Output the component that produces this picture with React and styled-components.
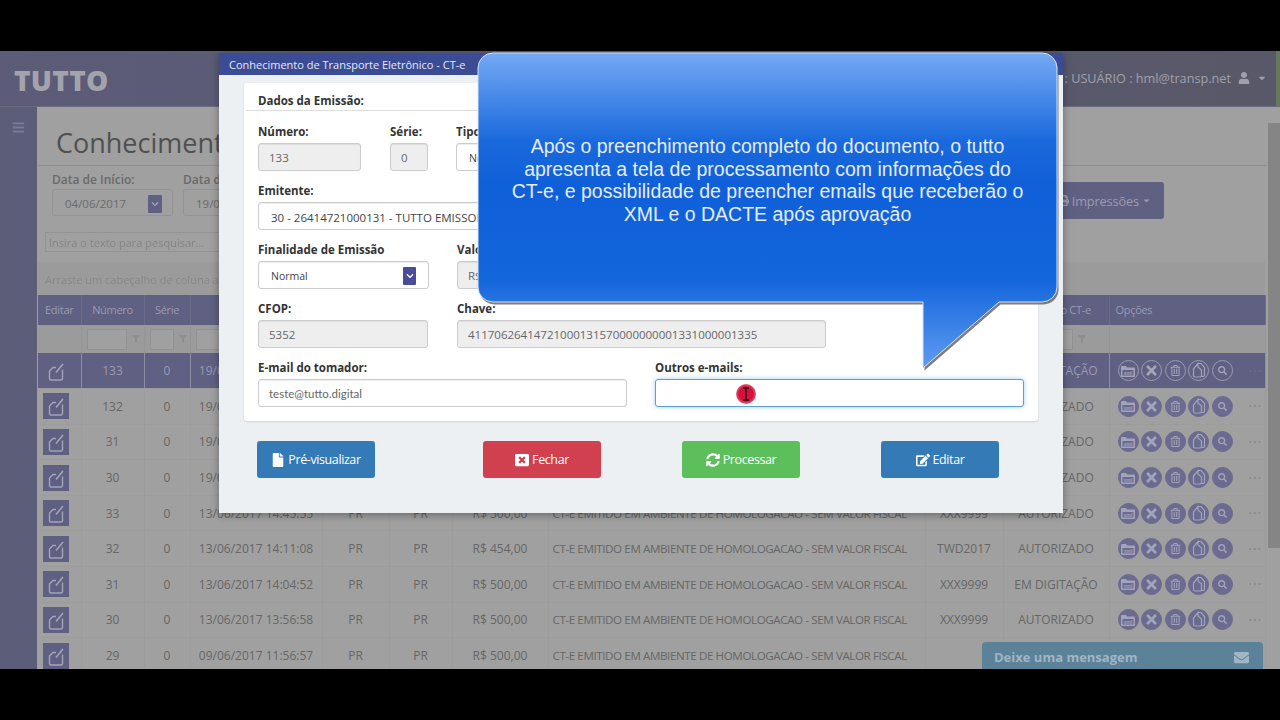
import React from "react";
import styled, { createGlobalStyle } from "styled-components";
import {
  FaBars,
  FaCaretDown,
  FaChevronDown,
  FaEdit,
  FaEnvelope,
  FaFile,
  FaFilter,
  FaPrint,
  FaRegTrashAlt,
  FaSearch,
  FaSyncAlt,
  FaTimes,
  FaUser,
  FaWindowClose,
} from "react-icons/fa";

const GlobalStyle = createGlobalStyle`
  html, body {
    margin: 0;
    height: 100%;
    background: #000;
    overflow: hidden;
  }
  * { box-sizing: border-box; }
  body { font-family: "Open Sans", "Liberation Sans", sans-serif; }
`;

const Stage = styled.div`
  width: 1280px;
  height: 720px;
  background: #000;
  padding: 51px 0;
`;

const Screen = styled.div`
  position: relative;
  width: 1280px;
  height: 618px;
  overflow: hidden;
  background: #a0a0a0;
`;

const Header = styled.header`
  height: 56px;
  background: linear-gradient(90deg, #5c5c78 0%, #5a5a74 50%, #585868 100%);
  border-right: 4px solid #66785f;
  border-bottom: 1px solid #6a6a7e;
  display: flex;
  align-items: center;
  padding: 0 9px 0 14px;
`;

const Logo = styled.div`
  font-size: 28px;
  font-weight: 800;
  color: #a3a3ac;
  letter-spacing: 0.3px;
  margin-top: 2px;
`;

const UserBox = styled.div`
  margin-left: auto;
  display: flex;
  align-items: center;
  gap: 7px;
  font-size: 12.7px;
  color: #a0a0ac;
  margin-top: -1px;
`;

const Body = styled.div`
  display: flex;
  height: 562px;
`;

const Sidebar = styled.aside`
  width: 37px;
  background: #5c5d79;
  color: #7a7b94;
  font-size: 13px;
  padding: 13px 0 0 12px;
  flex: none;
`;

const Main = styled.main`
  width: 1231px;
  flex: none;
  overflow: hidden;
`;

const Title = styled.h1`
  margin: 0 1px 0 1px;
  height: 59px;
  border-bottom: 1px solid #8f8f8f;
  font-size: 27px;
  font-weight: 400;
  color: #505050;
  padding: 17px 0 0 18px;
  line-height: 38px;
`;

const FilterRow = styled.div`
  display: flex;
  height: 66px;
  padding: 5px 104px 0 15px;
`;

const FilterField = styled.div`
  width: ${(p) => p.$w}px;
  margin-right: 10px;
`;

const FilterLabel = styled.div`
  font-size: 12px;
  font-weight: 600;
  color: #6a6a6a;
  height: 18px;
  line-height: 17px;
`;

const DateBox = styled.div`
  height: 27px;
  border: 1px solid #939393;
  border-radius: 3px;
  display: flex;
  align-items: center;
  padding: 2px 10px 0 12px;
  font-size: 11.5px;
  color: #6a6a6a;
  justify-content: space-between;
`;

const Arrow = styled.span`
  width: ${(p) => (p.$dim ? 14 : 13)}px;
  height: 18px;
  background: ${(p) => (p.$dim ? "#606082" : "#4a4c98")};
  color: ${(p) => (p.$dim ? "#a0a0b6" : "#fff")};
  border-radius: 1px;
  display: flex;
  align-items: center;
  justify-content: center;
  font-size: 8px;
  flex: none;
`;

const PrintButton = styled.div`
  margin-left: auto;
  width: 204px;
  height: 37px;
  background: #606082;
  border-radius: 3px;
  color: #9c9cb0;
  font-size: 12.7px;
  letter-spacing: -0.1px;
  display: flex;
  align-items: center;
  justify-content: flex-end;
  gap: 3px;
  padding-right: 13px;
  margin-top: 11px;
`;

const SearchRow = styled.div`
  height: 30px;
  padding-left: 8px;
`;

const SearchBox = styled.div`
  width: 300px;
  height: 20px;
  border: 1px solid #939393;
  font-size: 11px;
  color: #858585;
  padding-left: 3px;
  line-height: 19px;
  filter: blur(0.5px);
`;

const GroupPanel = styled.div`
  margin: 0 3px 0 1px;
  height: 33px;
  background: #9b9b9b;
  font-size: 11px;
  color: #888;
  padding: 10px 0 0 7px;
  filter: blur(0.4px);
`;

const Grid = styled.table`
  width: 1227px;
  margin-left: 1px;
  border-collapse: collapse;
  table-layout: fixed;
  font-size: 12px;
  color: #666;
`;

const HeadCell = styled.th`
  height: 30px;
  background: #606082;
  color: #9a9ab2;
  font-size: 11px;
  letter-spacing: -0.3px;
  font-weight: 400;
  text-align: ${(p) => (p.$left ? "left" : "center")};
  padding: 0 0 2px ${(p) => (p.$left ? 6 : 0)}px;
  border-right: 1px solid #6b6b8a;
  overflow: hidden;
  white-space: nowrap;
`;

const FilterCell = styled.td`
  height: 28px;
  background: #9b9b9b;
  border-right: 1px solid #959595;
  padding: 0 0 0 5px;
  white-space: nowrap;
`;

const FilterInput = styled.span`
  display: inline-block;
  vertical-align: middle;
  width: ${(p) => p.$w}px;
  height: 21px;
  border: 1px solid #929292;
  background: #a0a0a0;
`;

const FilterIcon = styled.span`
  display: inline-block;
  vertical-align: middle;
  margin-left: 5px;
  font-size: 8px;
  color: #8e8e8e;
`;

const Cell = styled.td`
  height: 35.6px;
  text-align: ${(p) => (p.$left ? "left" : "center")};
  padding: 0 0 0 ${(p) => (p.$left ? 4 : 0)}px;
  background: ${(p) => (p.$selected ? "#606083" : "#a0a0a0")};
  color: ${(p) => (p.$selected ? "#9a9ab2" : "#666")};
  font-size: ${(p) => (p.$left ? 11.6 : 12)}px;
  letter-spacing: ${(p) => (p.$left ? "-0.4px" : "0")};
  border-right: 1px solid ${(p) => (p.$selected ? "#8c8ca8" : "#9c9c9c")};
  border-bottom: 1px solid #9c9c9c;
  white-space: nowrap;
  overflow: hidden;
`;

const EditCell = styled(Cell)`
  text-align: left;
  padding-left: 5px;
`;

const EditBadge = styled.span`
  display: inline-flex;
  width: 26px;
  height: 26px;
  background: ${(p) => (p.$selected ? "transparent" : "#5f5f82")};
  color: #a3a3ba;
  vertical-align: middle;
`;

const OptionsWrap = styled.div`
  display: flex;
  align-items: center;
  padding-left: 8px;
  gap: 2.6px;
`;

const RoundIcon = styled.span`
  width: 21px;
  height: 21px;
  border-radius: 50%;
  flex: none;
  display: flex;
  align-items: center;
  justify-content: center;
  background: ${(p) => (p.$selected ? "transparent" : "#6a6b8e")};
  border: 1px solid ${(p) => (p.$selected ? "#9c9cb6" : "#6a6b8e")};
  color: #a3a3bc;
  --folder-fill: ${(p) => (p.$selected ? "#606083" : "#6a6b8e")};
`;

const More = styled.span`
  margin: 0 0 6px 13px;
  color: ${(p) => (p.$selected ? "#6c6c8c" : "#8b8b8b")};
  font-size: 12px;
  letter-spacing: 1.2px;
  line-height: 10px;
  font-weight: 700;
`;

const Scrollbar = styled.div`
  width: 12px;
  flex: none;
  padding-top: 16px;
`;

const ScrollThumb = styled.div`
  height: 425px;
  background: #858585;
`;

const Chat = styled.div`
  position: absolute;
  left: 982px;
  bottom: 0;
  width: 281px;
  height: 27px;
  background: #5b8299;
  border-radius: 4px 4px 0 0;
  display: flex;
  align-items: center;
  justify-content: space-between;
  padding: 3px 14px 0 12px;
  color: #a0b6c4;
  font-size: 13px;
  font-weight: 700;
`;

const Modal = styled.section`
  position: absolute;
  left: 219px;
  top: 2px;
  width: 844px;
  height: 460px;
  background: #ecf0f3;
  box-shadow: 0 2px 8px rgba(0, 0, 0, 0.35);
`;

const ModalTitle = styled.div`
  height: 22px;
  background: #3b4b96;
  color: #e6e9f5;
  font-size: 11px;
  font-weight: 400;
  line-height: 23px;
  padding-left: 10px;
`;

const ModalBody = styled.div`
  padding: 8px 25px 0;
`;

const Panel = styled.div`
  background: #fff;
  height: 338px;
  border-radius: 3px;
  box-shadow: 0 1px 2px rgba(0, 0, 0, 0.12);
  padding: 9px 14px 0;
`;

const PanelTitle = styled.div`
  font-size: 11.5px;
  font-weight: 700;
  color: #333;
  height: 19px;
  line-height: 18px;
  margin: 0 -12px 12px;
  padding-left: 12px;
  border-bottom: 1px solid #ddd;
`;

const FormRow = styled.div`
  display: flex;
  height: 48px;
  margin-bottom: 11px;
`;

const Field = styled.div`
  width: ${(p) => p.$w}px;
  margin-right: ${(p) => p.$gap || 0}px;
  flex: none;
`;

const Label = styled.label`
  display: block;
  font-size: 11.5px;
  font-weight: 700;
  color: #333;
  height: 20px;
  line-height: 17px;
  white-space: nowrap;
`;

const Input = styled.div`
  height: 28px;
  border: 1px solid ${(p) => (p.$focus ? "#5b9fd6" : "#ccc")};
  border-radius: 3px;
  background: ${(p) => (p.$readonly ? "#eee" : "#fff")};
  box-shadow: ${(p) =>
    p.$focus
      ? "0 0 5px rgba(102, 175, 233, 0.6)"
      : "inset 0 1px 1px rgba(0, 0, 0, 0.075)"};
  color: ${(p) => (p.$dark ? "#444" : "#666")};
  font-family: ${(p) => (p.$narrow ? "Lato, sans-serif" : "inherit")};
  font-size: ${(p) => p.$size || 11.5}px;
  padding: ${(p) => (p.$dark ? 2 : 0)}px ${(p) => (p.$pad ? 12 : 10)}px 0;
  display: flex;
  align-items: center;
  justify-content: space-between;
  white-space: nowrap;
  overflow: hidden;
`;

const ButtonRow = styled.div`
  display: grid;
  grid-template-columns: 226px 199px 199px 118px;
  padding: 20px 0 0 13px;
`;

const ActionButton = styled.button`
  height: 37px;
  width: 118px;
  border: none;
  border-radius: 3px;
  background: ${(p) => p.$bg};
  color: #fff;
  font-family: inherit;
  font-size: 12.5px;
  letter-spacing: -0.4px;
  display: flex;
  align-items: center;
  justify-content: center;
  gap: 3px;
  padding: 0;
  svg { font-size: 14px; }
`;

const Callout = styled.div`
  position: absolute;
  left: 472px;
  top: -3px;
  width: 592px;
  height: 328px;
`;

const CalloutShape = styled.svg`
  display: block;
  overflow: visible;
`;

const CalloutText = styled.p`
  position: absolute;
  left: 6px;
  top: 87px;
  width: 579px;
  margin: 0;
  text-align: center;
  font-family: "Liberation Sans", Arial, sans-serif;
  font-size: 19.5px;
  line-height: 22.6px;
  color: #e4ecf8;
`;

const Pointer = styled.div`
  position: absolute;
  left: 736px;
  top: 333px;
  width: 20px;
  height: 20px;
  border-radius: 50%;
  background: radial-gradient(circle, #d8103a 0%, #d8103a 50%, rgba(216, 16, 58, 0.2) 100%);
  display: flex;
  align-items: center;
  justify-content: center;
`;

const columns = [43, 63, 46, 132, 67, 63, 96, 377, 78, 106, 156];

const rows = [
  ["132", "19/06/2017 15:20:11", "PR", "PR", "R$ 500,00", "TWD2017", "AUTORIZADO"],
  ["31", "19/06/2017 15:02:40", "PR", "PR", "R$ 500,00", "XXX9999", "AUTORIZADO"],
  ["30", "19/06/2017 14:51:27", "PR", "PR", "R$ 500,00", "XXX9999", "AUTORIZADO"],
  ["33", "13/06/2017 14:45:55", "PR", "PR", "R$ 500,00", "XXX9999", "AUTORIZADO"],
  ["32", "13/06/2017 14:11:08", "PR", "PR", "R$ 454,00", "TWD2017", "AUTORIZADO"],
  ["31", "13/06/2017 14:04:52", "PR", "PR", "R$ 500,00", "XXX9999", "EM DIGITAÇÃO"],
  ["30", "13/06/2017 13:56:58", "PR", "PR", "R$ 500,00", "XXX9999", "AUTORIZADO"],
  ["29", "09/06/2017 11:56:57", "PR", "PR", "R$ 500,00", "", ""],
];

const NOTE = "CT-E EMITIDO EM AMBIENTE DE HOMOLOGACAO - SEM VALOR FISCAL";

function EditGlyph() {
  return (
    <svg width="26" height="26" viewBox="0 0 26 26" fill="none" stroke="currentColor" strokeWidth="1.4">
      <path d="M13 9.5H10L6.5 13v7.5A1.5 1.5 0 0 0 8 22h10a1.5 1.5 0 0 0 1.5-1.5V11.5" />
      <path d="M13 14.5 20 6" strokeWidth="1.6" />
    </svg>
  );
}

function XmlFolder() {
  return (
    <svg width="14" height="12" viewBox="0 0 14 12">
      <path d="M0 2a1 1 0 0 1 1-1h4l1 1.5h7a1 1 0 0 1 1 1V11a1 1 0 0 1-1 1H1a1 1 0 0 1-1-1z" fill="currentColor" />
      <rect x="1.5" y="5" width="11" height="5.5" fill="var(--folder-fill)" />
      <text x="7" y="9.6" textAnchor="middle" fontSize="5" fontWeight="700" fill="currentColor" fontFamily="Liberation Sans">
        xml
      </text>
    </svg>
  );
}

function CopyGlyph() {
  return (
    <svg width="14" height="17" viewBox="0 0 14 17" fill="none" stroke="currentColor" strokeWidth="1.2">
      <path d="M6 1.5h3l3.5 4V13a1.5 1.5 0 0 1-1.5 1.5H9" />
      <path d="M6 1.5 1.5 7v6.5A1.5 1.5 0 0 0 3 15h5a1.5 1.5 0 0 0 1.5-1.5V8L6 5z" />
    </svg>
  );
}

function Options({ selected }) {
  return (
    <OptionsWrap>
      <RoundIcon $selected={selected}><XmlFolder /></RoundIcon>
      <RoundIcon $selected={selected}><FaTimes size={15} /></RoundIcon>
      <RoundIcon $selected={selected}><FaRegTrashAlt size={11} /></RoundIcon>
      <RoundIcon $selected={selected}><CopyGlyph /></RoundIcon>
      <RoundIcon $selected={selected}><FaSearch size={9} /></RoundIcon>
      <More $selected={selected}>...</More>
    </OptionsWrap>
  );
}

function Row({ data, selected }) {
  const [num, date, uf1, uf2, value, plate, status] = data;
  return (
    <tr>
      <EditCell $selected={selected}><EditBadge $selected={selected}><EditGlyph /></EditBadge></EditCell>
      <Cell $selected={selected}>{num}</Cell>
      <Cell $selected={selected}>0</Cell>
      <Cell $selected={selected}>{date}</Cell>
      <Cell $selected={selected}>{uf1}</Cell>
      <Cell $selected={selected}>{uf2}</Cell>
      <Cell $selected={selected}>{value}</Cell>
      <Cell $selected={selected} $left>{NOTE}</Cell>
      <Cell $selected={selected}>{plate}</Cell>
      <Cell $selected={selected}>{status}</Cell>
      <Cell $selected={selected}><Options selected={selected} /></Cell>
    </tr>
  );
}

const heads = ["Editar", "Número", "Série", "Data", "UF", "UF", "Valor", "Observação", "Placa", "Status do CT-e", "Opções"];
const filterWidths = [0, 40, 24, 100, 40, 40, 50, 300, 40, 64, 0];

export default function App() {
  return (
    <>
      <GlobalStyle />
      <Stage>
        <Screen>
          <Header>
            <Logo>TUTTO</Logo>
            <UserBox>
              <span>: USUÁRIO : hml@transp.net</span>
              <FaUser size={12} />
              <FaCaretDown size={10} />
            </UserBox>
          </Header>
          <Body>
            <Sidebar><FaBars /></Sidebar>
            <Main>
              <Title>Conhecimento de Transporte</Title>
              <FilterRow>
                <FilterField $w={121}>
                  <FilterLabel>Data de Início:</FilterLabel>
                  <DateBox>04/06/2017<Arrow $dim><FaChevronDown /></Arrow></DateBox>
                </FilterField>
                <FilterField $w={121}>
                  <FilterLabel>Data de Fim:</FilterLabel>
                  <DateBox>19/06/2017<Arrow $dim><FaChevronDown /></Arrow></DateBox>
                </FilterField>
                <PrintButton><FaPrint size={11} /> Impressões <FaCaretDown size={9} /></PrintButton>
              </FilterRow>
              <SearchRow><SearchBox>Insira o texto para pesquisar...</SearchBox></SearchRow>
              <GroupPanel>Arraste um cabeçalho de coluna aqui para agrupar por essa coluna</GroupPanel>
              <Grid>
                <colgroup>
                  {columns.map((w, i) => <col key={i} style={{ width: w }} />)}
                </colgroup>
                <thead>
                  <tr>
                    {heads.map((h, i) => (
                      <HeadCell key={i} $left={i === 10}>{h}</HeadCell>
                    ))}
                  </tr>
                </thead>
                <tbody>
                  <tr>
                    {filterWidths.map((w, i) => (
                      <FilterCell key={i}>
                        {w > 0 && <FilterInput $w={w} />}
                        {w > 0 && <FilterIcon><FaFilter /></FilterIcon>}
                      </FilterCell>
                    ))}
                  </tr>
                  <Row selected data={["133", "19/06/2017 15:31:02", "PR", "PR", "R$ 500,00", "XXX9999", "EM DIGITAÇÃO"]} />
                  {rows.map((r, i) => <Row key={i} data={r} />)}
                </tbody>
              </Grid>
            </Main>
            <Scrollbar><ScrollThumb /></Scrollbar>
          </Body>
          <Chat>Deixe uma mensagem <FaEnvelope size={15} /></Chat>

          <Modal>
            <ModalTitle>Conhecimento de Transporte Eletrônico - CT-e</ModalTitle>
            <ModalBody>
              <Panel>
                <PanelTitle>Dados da Emissão:</PanelTitle>
                <FormRow>
                  <Field $w={103} $gap={29}><Label>Número:</Label><Input $readonly>133</Input></Field>
                  <Field $w={38} $gap={28}><Label>Série:</Label><Input $readonly>0</Input></Field>
                  <Field $w={200}><Label>Tipo:</Label><Input $dark $pad $size={10.5}>Normal</Input></Field>
                </FormRow>
                <FormRow>
                  <Field $w={766}><Label>Emitente:</Label><Input $dark $pad>30 - 26414721000131 - TUTTO EMISSOR</Input></Field>
                </FormRow>
                <FormRow>
                  <Field $w={171} $gap={28}>
                    <Label>Finalidade de Emissão</Label>
                    <Input $dark $pad $size={10.5}>Normal<Arrow><FaChevronDown /></Arrow></Input>
                  </Field>
                  <Field $w={200}><Label>Valor:</Label><Input $readonly>R$ 500,00</Input></Field>
                </FormRow>
                <FormRow>
                  <Field $w={170} $gap={29}><Label>CFOP:</Label><Input $readonly>5352</Input></Field>
                  <Field $w={369}><Label>Chave:</Label><Input $readonly>41170626414721000131570000000001331000001335</Input></Field>
                </FormRow>
                <FormRow>
                  <Field $w={369} $gap={28}><Label>E-mail do tomador:</Label><Input $narrow>teste@tutto.digital</Input></Field>
                  <Field $w={369}><Label>Outros e-mails:</Label><Input $focus /></Field>
                </FormRow>
              </Panel>
              <ButtonRow>
                <ActionButton $bg="#337ab7"><FaFile /> Pré-visualizar</ActionButton>
                <ActionButton $bg="#d0404f"><FaWindowClose /> Fechar</ActionButton>
                <ActionButton $bg="#5cbf5c"><FaSyncAlt /> Processar</ActionButton>
                <ActionButton $bg="#337ab7"><FaEdit /> Editar</ActionButton>
              </ButtonRow>
            </ModalBody>
          </Modal>

          <Pointer>
            <svg width="8" height="14" viewBox="0 0 8 14" fill="none" stroke="#111" strokeWidth="1.3">
              <path d="M1 1h6M1 13h6M4 1v12" />
            </svg>
          </Pointer>

          <Callout>
            <CalloutShape width="592" height="328" viewBox="0 0 592 328">
              <defs>
                <linearGradient id="calloutFill" x1="0" y1="0" x2="0" y2="1">
                  <stop offset="0" stopColor="#74a9f4" />
                  <stop offset="0.28" stopColor="#1a69dc" />
                  <stop offset="0.42" stopColor="#0f5fd9" />
                  <stop offset="0.72" stopColor="#1466dc" />
                  <stop offset="1" stopColor="#5f9bf0" />
                </linearGradient>
              </defs>
              <path
                d="M21 5H570a15 15 0 0 1 15 15V239a15 15 0 0 1-15 15H527L451 320V254H21a15 15 0 0 1-15-15V20A15 15 0 0 1 21 5Z"
                fill="#5e5e5e"
                transform="translate(1.5 2.5)"
                opacity="0.8"
              />
              <path
                d="M21 5H570a15 15 0 0 1 15 15V239a15 15 0 0 1-15 15H527L451 320V254H21a15 15 0 0 1-15-15V20A15 15 0 0 1 21 5Z"
                fill="url(#calloutFill)"
                stroke="#d7e2f2"
                strokeWidth="1"
              />
            </CalloutShape>
            <CalloutText>
              Após o preenchimento completo do documento, o tutto
              <br />apresenta a tela de processamento com informações do
              <br />CT-e, e possibilidade de preencher emails que receberão o
              <br />XML e o DACTE após aprovação
            </CalloutText>
          </Callout>
        </Screen>
      </Stage>
    </>
  );
}
